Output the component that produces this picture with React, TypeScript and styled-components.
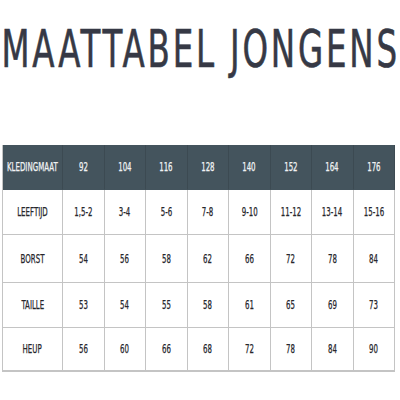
import React from "react";
import styled, { createGlobalStyle } from "styled-components";

const Global = createGlobalStyle`
  html, body { margin: 0; padding: 0; background: #ffffff; }
  body { width: 400px; height: 400px; overflow: hidden; }
`;

const Page = styled.div`
  width: 400px;
  height: 400px;
  display: flex;
  flex-direction: column;
  font-family: "DejaVu Sans Condensed", "DejaVu Sans", sans-serif;
  font-stretch: condensed;
`;

const TitleRow = styled.div`
  height: 145px;
  padding-top: 22px;
  box-sizing: border-box;
  overflow: hidden;
`;

const Title = styled.h1`
  margin: 0;
  display: inline-block;
  white-space: nowrap;
  font-weight: 400;
  font-size: 51px;
  line-height: 55px;
  letter-spacing: 4px;
  color: #363945;
  -webkit-text-stroke: 0.6px #363945;
  transform-origin: 0 0;
  transform: scaleX(0.708);
  padding-left: 2px;
`;

const Table = styled.div`
  margin-left: 2px;
  width: 393px;
  display: grid;
  grid-template-columns: 60px repeat(8, 1fr);
  grid-template-rows: 45px 45px 48px 45px 43px;
  border-left: 1px solid #c4c4c4;
  border-bottom: 1px solid #c4c4c4;
  box-sizing: border-box;
`;

const Cell = styled.div<{ $head?: boolean }>`
  display: flex;
  align-items: center;
  justify-content: center;
  font-size: 11.5px;
  color: ${(p) => (p.$head ? "#f1f3f4" : "#26262b")};
  background: ${(p) => (p.$head ? "#44545d" : "#ffffff")};
  border-right: 1px solid ${(p) => (p.$head ? "#3c4a52" : "#c4c4c4")};
  border-bottom: 1px solid ${(p) => (p.$head ? "#44545d" : "#c4c4c4")};
  box-sizing: border-box;
  white-space: nowrap;
`;

const Label = styled.span`
  display: inline-block;
  transform: scaleX(0.68);
  -webkit-text-stroke: 0.25px currentColor;
`;

const rows: string[][] = [
  ["KLEDINGMAAT", "92", "104", "116", "128", "140", "152", "164", "176"],
  ["LEEFTIJD", "1,5-2", "3-4", "5-6", "7-8", "9-10", "11-12", "13-14", "15-16"],
  ["BORST", "54", "56", "58", "62", "66", "72", "78", "84"],
  ["TAILLE", "53", "54", "55", "58", "61", "65", "69", "73"],
  ["HEUP", "56", "60", "66", "68", "72", "78", "84", "90"],
];

export default function App() {
  return (
    <Page>
      <Global />
      <TitleRow>
        <Title>MAATTABEL JONGENS</Title>
      </TitleRow>
      <Table>
        {rows.map((r, i) =>
          r.map((c, j) => (
            <Cell key={`${i}-${j}`} $head={i === 0}>
              <Label>{c}</Label>
            </Cell>
          ))
        )}
      </Table>
    </Page>
  );
}
